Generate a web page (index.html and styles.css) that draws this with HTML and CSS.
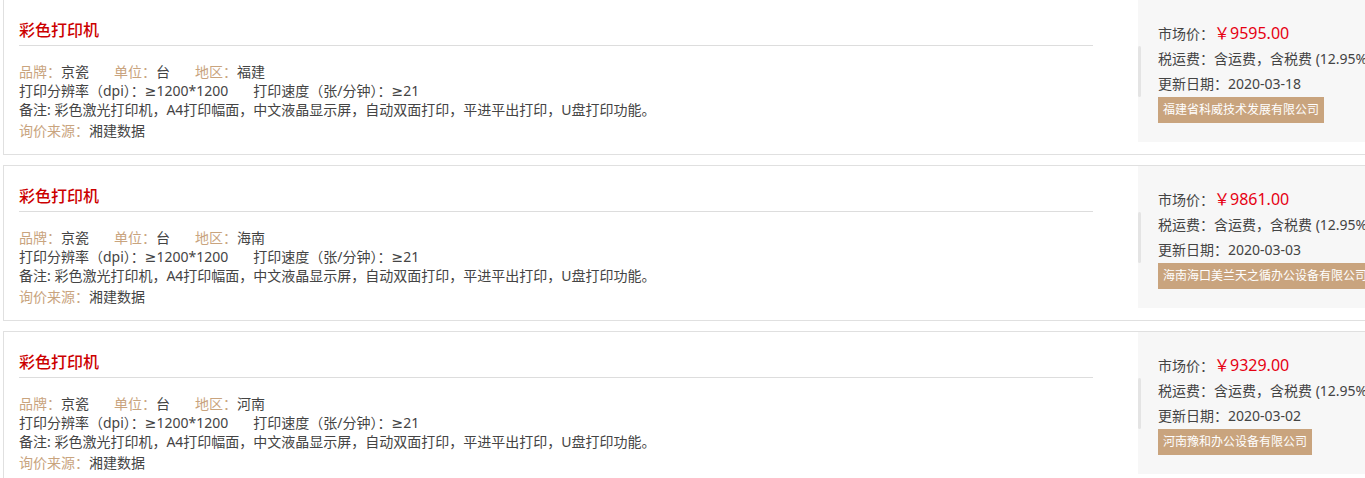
FILE: index.html
```html
<!DOCTYPE html>
<html lang="zh-CN">
<head>
    <meta charset="UTF-8">
    <title>彩色打印机 - 询价</title>
    <link rel="stylesheet" href="styles.css">
</head>
<body>
    <div class="list">
        <div class="item">
            <div class="info">
                <h3 class="name">彩色打印机</h3>
                <div class="attrs">
                    <p><span class="pair"><span class="lbl">品牌：</span>京瓷</span><span class="pair"><span class="lbl">单位：</span>台</span><span class="pair"><span class="lbl">地区：</span>福建</span></p>
                    <p><span class="pair">打印分辨率（dpi）：≥1200*1200</span><span class="pair">打印速度（张/分钟）：≥21</span></p>
                    <p>备注: 彩色激光打印机，A4打印幅面，中文液晶显示屏，自动双面打印，平进平出打印，U盘打印功能。</p>
                    <p class="src"><span class="lbl">询价来源：</span>湘建数据</p>
                </div>
            </div>
            <div class="price-box">
                <p>市场价：<span class="price">￥9595.00</span></p>
                <p>税运费：含运费，含税费 (12.95%)</p>
                <p>更新日期：2020-03-18</p>
                <span class="supplier">福建省科威技术发展有限公司</span>
            </div>
        </div>

        <div class="item">
            <div class="info">
                <h3 class="name">彩色打印机</h3>
                <div class="attrs">
                    <p><span class="pair"><span class="lbl">品牌：</span>京瓷</span><span class="pair"><span class="lbl">单位：</span>台</span><span class="pair"><span class="lbl">地区：</span>海南</span></p>
                    <p><span class="pair">打印分辨率（dpi）：≥1200*1200</span><span class="pair">打印速度（张/分钟）：≥21</span></p>
                    <p>备注: 彩色激光打印机，A4打印幅面，中文液晶显示屏，自动双面打印，平进平出打印，U盘打印功能。</p>
                    <p class="src"><span class="lbl">询价来源：</span>湘建数据</p>
                </div>
            </div>
            <div class="price-box">
                <p>市场价：<span class="price">￥9861.00</span></p>
                <p>税运费：含运费，含税费 (12.95%)</p>
                <p>更新日期：2020-03-03</p>
                <span class="supplier">海南海口美兰天之循办公设备有限公司</span>
            </div>
        </div>

        <div class="item">
            <div class="info">
                <h3 class="name">彩色打印机</h3>
                <div class="attrs">
                    <p><span class="pair"><span class="lbl">品牌：</span>京瓷</span><span class="pair"><span class="lbl">单位：</span>台</span><span class="pair"><span class="lbl">地区：</span>河南</span></p>
                    <p><span class="pair">打印分辨率（dpi）：≥1200*1200</span><span class="pair">打印速度（张/分钟）：≥21</span></p>
                    <p>备注: 彩色激光打印机，A4打印幅面，中文液晶显示屏，自动双面打印，平进平出打印，U盘打印功能。</p>
                    <p class="src"><span class="lbl">询价来源：</span>湘建数据</p>
                </div>
            </div>
            <div class="price-box">
                <p>市场价：<span class="price">￥9329.00</span></p>
                <p>税运费：含运费，含税费 (12.95%)</p>
                <p>更新日期：2020-03-02</p>
                <span class="supplier">河南豫和办公设备有限公司</span>
            </div>
        </div>
    </div>
</body>
</html>
```

FILE: styles.css
```css
body {
    margin: 0;
    background: #fff;
    font-family: "Noto Sans", "DejaVu Sans", "Noto Sans CJK SC", sans-serif;
    font-size: 14px;
    color: #444;
    overflow: hidden;
}
p {
    margin: 0;
}
.list {
    width: 1420px;
    margin-top: -1px;
    padding-left: 3px;
}
.item {
    display: flex;
    align-items: flex-start;
    border: 1px solid #e0e0e0;
    margin-bottom: 10px;
}
.info {
    width: 1074px;
    margin-left: 15px;
    margin-right: 45px;
    padding-bottom: 14px;
}
.name {
    margin: 0;
    padding: 18px 0 3px;
    line-height: 24px;
    font-size: 16px;
    font-weight: 500;
    color: #cc0000;
    border-bottom: 1px solid #ddd;
}
.attrs {
    margin-top: 16px;
    line-height: 19px;
}
.pair {
    margin-right: 25px;
}
.lbl {
    color: #c9a47e;
}
.src {
    margin-top: 2px;
}
.price-box {
    flex: 1;
    position: relative;
    height: 102px;
    padding: 21px 0 19px 20px;
    background: #f7f7f7;
    line-height: 25px;
    white-space: nowrap;
}
.price-box::before {
    content: "";
    position: absolute;
    left: 0;
    top: 46px;
    width: 3px;
    height: 51px;
    background: #e4e4e4;
    border-radius: 2px;
}
.price {
    color: #e60012;
    font-size: 16px;
}
.supplier {
    display: inline-block;
    margin-top: 1px;
    padding: 0 5px;
    line-height: 26px;
    font-size: 12px;
    color: #fff;
    background: #c9a47e;
}
```
